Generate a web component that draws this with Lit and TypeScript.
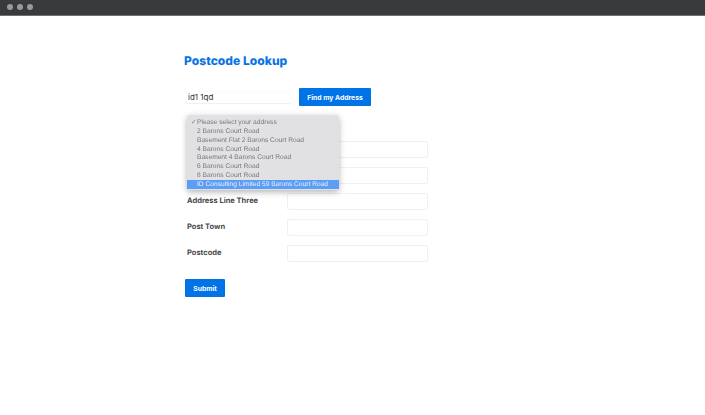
import { html, LitElement, css } from 'lit';
import { customElement, state } from 'lit/decorators.js';

const ADDRESSES = [
  'Please select your address',
  '2 Barons Court Road',
  'Basement Flat 2 Barons Court Road',
  '4 Barons Court Road',
  'Basement 4 Barons Court Road',
  '6 Barons Court Road',
  '8 Barons Court Road',
  'ID Consulting Limited 59 Barons Court Road',
];

const FIELDS = ['Address Line One', 'Address Line Two', 'Address Line Three', 'Post Town', 'Postcode'];

@customElement('app-root')
export class AppRoot extends LitElement {
  @state() postcode = 'id1 1qd';
  @state() highlighted = 7;

  static styles = css`
    :host {
      display: block;
      width: 705px;
      height: 415px;
      overflow: hidden;
      background: #fff;
      font-family: "Inter", "Liberation Sans", sans-serif;
      text-rendering: geometricPrecision;
    }

    * {
      box-sizing: border-box;
    }

    .titlebar {
      height: 16px;
      display: flex;
      align-items: center;
      gap: 3.8px;
      padding: 0 0 1px 7px;
      background: #393a3b;
      border-bottom: 1px solid #6f6f6f;
    }

    .dot {
      width: 6px;
      height: 6px;
      border-radius: 50%;
      background: #9a9a9a;
    }

    .page {
      padding: 36px 0 0 184px;
    }

    h1 {
      margin: 0;
      font-size: 12px;
      line-height: 18px;
      font-weight: 800;
      letter-spacing: 0.05px;
      color: #0a73e3;
    }

    .lookup {
      position: relative;
      display: flex;
      align-items: center;
      gap: 8px;
      margin-top: 18px;
      padding-left: 2px;
    }

    .postcode {
      width: 105px;
      height: 13px;
      padding: 0 2px 0 1px;
      border: 1px solid #fbfbfc;
      border-bottom-color: #f0f0f2;
      outline: 0;
      font: 400 8px "Inter", sans-serif;
      color: #333;
    }

    button {
      border: 0;
      border-radius: 1px;
      background: #0073e6;
      color: #fff;
      font: 700 6.8px "Inter", sans-serif;
    }

    .find {
      width: 72px;
      height: 18px;
    }

    .menu {
      position: absolute;
      z-index: 2;
      left: 3px;
      top: 27px;
      width: 152px;
      padding: 3px 0 1px;
      border-radius: 3px;
      background: #e1e0e3;
      box-shadow: 0 2px 6px rgba(0, 0, 0, 0.3);
      font: 400 6.65px/7.85px "Liberation Sans", sans-serif;
      color: #77767b;
      will-change: transform;
    }

    .option {
      position: relative;
      padding: 1px 0 0 10px;
      white-space: nowrap;
    }

    .option.active {
      background: #5c9df5;
      color: #e8f0fc;
    }

    .check {
      position: absolute;
      left: 4px;
    }

    form {
      display: flex;
      flex-direction: column;
      gap: 9px;
      margin-top: 35px;
      padding-left: 3px;
    }

    .row {
      display: flex;
      align-items: flex-start;
    }

    label {
      width: 100px;
      font-size: 7.5px;
      line-height: 16px;
      font-weight: 700;
      color: #4a4a4a;
    }

    .row input {
      width: 141px;
      height: 17px;
      border: 1px solid #f0f0f3;
      border-radius: 2px;
      outline: 0;
    }

    .submit {
      width: 40px;
      height: 18px;
      margin: 17px 0 0 1px;
    }
  `;

  render() {
    return html`
      <div class="titlebar">
        <span class="dot"></span><span class="dot"></span><span class="dot"></span>
      </div>
      <div class="page">
        <h1>Postcode Lookup</h1>
        <div class="lookup">
          <input class="postcode" .value=${this.postcode} />
          <button class="find" type="button">Find my Address</button>
          <div class="menu">
            ${ADDRESSES.map((a, i) => html`
              <div class="option ${i === this.highlighted ? 'active' : ''}">
                ${i === 0 ? html`<span class="check">✓</span>` : ''}${a}
              </div>
            `)}
          </div>
        </div>
        <form>
          ${FIELDS.map((f) => html`
            <div class="row"><label>${f}</label><input /></div>
          `)}
        </form>
        <button class="submit" type="button">Submit</button>
      </div>
    `;
  }
}
